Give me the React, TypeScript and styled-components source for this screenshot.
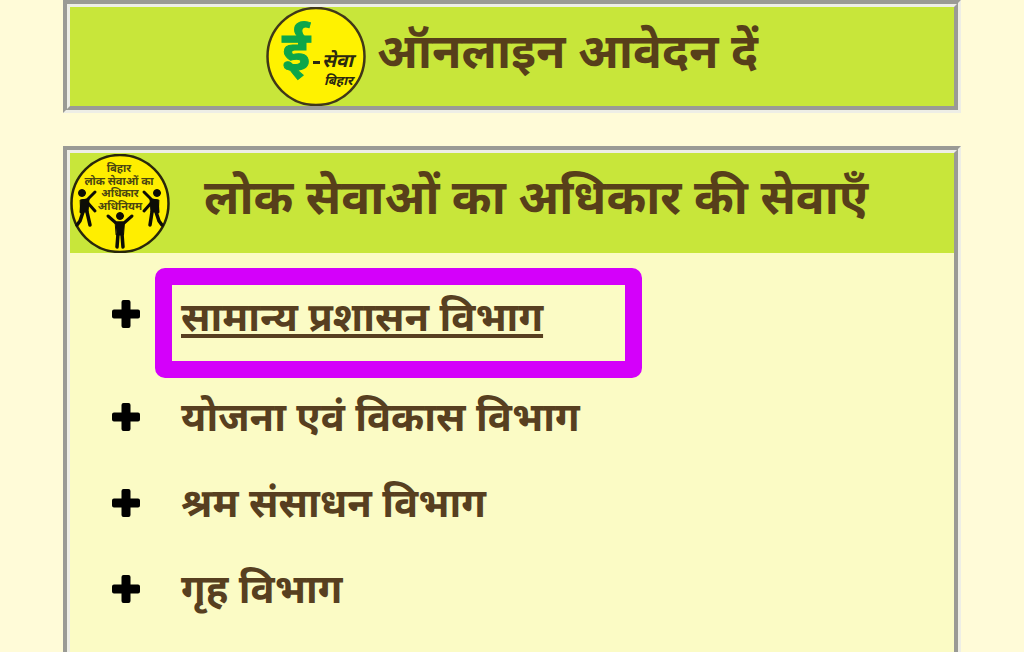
import React from "react";
import styled, { createGlobalStyle } from "styled-components";

const fontStack = `"Noto Sans Devanagari", "Noto Sans", "Open Sans", sans-serif`;

const GlobalStyle = createGlobalStyle`
  *, *::before, *::after { box-sizing: border-box; }
  body {
    margin: 0;
    background: #fffbd8;
    color: #573f20;
    font-family: ${fontStack};
    overflow-x: hidden;
  }
`;

const Page = styled.main`
  display: flex;
  flex-direction: column;
  gap: 33px;
  padding: 0 63px;
`;

const Panel = styled.section`
  border: 7px groove #eeeee6;
  background: #fbfbc5;
`;

const PanelHeader = styled.header<{ $centered?: boolean }>`
  display: flex;
  align-items: center;
  justify-content: ${(p) => (p.$centered ? "center" : "flex-start")};
  gap: ${(p) => (p.$centered ? "11px" : "34px")};
  min-height: ${(p) => (p.$centered ? "99px" : "100px")};
  background: #c8e63a;
`;

const Title = styled.h1`
  margin: 0;
  font-size: 48px;
  line-height: 60px;
  font-weight: 700;
  color: #573f1a;
  white-space: nowrap;
`;

const Logo = styled.svg`
  display: block;
  flex: none;
  width: 100px;
  height: 99px;
`;

const DepartmentList = styled.ul`
  margin: 0;
  padding: 0 0 24px 40px;
  list-style: none;
`;

const Department = styled.li<{ $tall?: boolean }>`
  position: relative;
  display: flex;
  align-items: center;
  gap: 39px;
  height: ${(p) => (p.$tall ? "121px" : "86px")};
`;

const ExpandButton = styled.button`
  display: flex;
  padding: 0;
  border: 0;
  background: none;
  color: #000;
  cursor: pointer;

  svg {
    display: block;
    width: 32px;
    height: 32px;
  }
`;

const DepartmentLink = styled.a<{ $underlined?: boolean }>`
  padding-top: ${(p) => (p.$underlined ? "14px" : "8px")};
  color: inherit;
  font-size: 40px;
  line-height: 52px;
  font-weight: 700;
  white-space: nowrap;
  text-decoration: ${(p) => (p.$underlined ? "underline" : "none")};
  text-decoration-thickness: 4px;
  text-decoration-skip-ink: none;
  text-underline-offset: 3px;
`;

const Highlight = styled.span`
  position: absolute;
  top: 15px;
  left: 45px;
  width: 487px;
  height: 110px;
  border: 17px solid #d400fa;
  border-radius: 10px;
  pointer-events: none;
`;

const PlusIcon = () => (
  <svg viewBox="0 0 32 32" aria-hidden="true">
    <path
      fill="currentColor"
      d="M13.5 2h5a2 2 0 0 1 2 2v7.500h7.500a2 2 0 0 1 2 2v5a2 2 0 0 1-2 2h-7.500v7.500a2 2 0 0 1-2 2h-5a2 2 0 0 1-2-2v-7.500h-7.500a2 2 0 0 1-2-2v-5a2 2 0 0 1 2-2h7.500v-7.500a2 2 0 0 1 2-2z"
    />
  </svg>
);

const EServiceLogo = () => (
  <Logo viewBox="0 0 100 99" role="img" aria-label="ई-सेवा बिहार" fontFamily={fontStack} fontWeight="700">
    <circle cx="50" cy="49.500" r="48.500" fill="#fff200" stroke="#403818" strokeWidth="2.500" />
    <text x="16" y="63" fontSize="54" fill="#0ca64a" stroke="#0ca64a" strokeWidth="1">ई</text>
    <path d="M47 55.500h7" stroke="#2b2910" strokeWidth="3" />
    <text x="56" y="60" fontSize="19" fontStyle="italic" fill="#2b2910">सेवा</text>
    <text x="58" y="78" fontSize="13" fontStyle="italic" fill="#2b2910">बिहार</text>
  </Logo>
);

const RightToServiceLogo = () => (
  <Logo viewBox="0 0 100 99" role="img" aria-label="बिहार लोक सेवाओं का अधिकार अधिनियम" fontFamily={fontStack}>
    <circle cx="50" cy="49.500" r="48.500" fill="#ffee00" stroke="#29270b" strokeWidth="2.500" />
    <g fill="#4b4610" fontSize="11" fontWeight="700" textAnchor="middle">
      <text x="49" y="18">बिहार</text>
      <text x="49" y="31">लोक सेवाओं का</text>
      <text x="50" y="43">अधिकार</text>
      <text x="50" y="56">अधिनियम</text>
    </g>
    <g fill="#0d0d06" stroke="#0d0d06" strokeLinecap="round" strokeLinejoin="round">
      <circle cx="50" cy="62" r="3.500" />
      <path d="M38 62l8 7h8l8-7" fill="none" strokeWidth="3" />
      <path d="M45.500 68h9l-1 13h-7z" />
      <path d="M48 80l-1 13M52 80l1 13" fill="none" strokeWidth="3.500" />
      <circle cx="12" cy="39" r="3.500" />
      <path d="M25 38l-8 8-5 1-1 11M17 48l8 9" fill="none" strokeWidth="3" />
      <path d="M10.500 46l8.500-1-1 13h-7z" />
      <path d="M13 58l-3 9-3 4M17 58l3 13" fill="none" strokeWidth="3.500" />
      <circle cx="87" cy="39" r="3.500" />
      <path d="M74 38l8 8 5 1 1 11M82 48l-8 9" fill="none" strokeWidth="3" />
      <path d="M88.500 46l-8.500-1 1 13h7z" />
      <path d="M86 58l3 9 3 4M82 58l-2 13" fill="none" strokeWidth="3.500" />
    </g>
  </Logo>
);

const departments = [
  { name: "सामान्य प्रशासन विभाग", highlighted: true },
  { name: "योजना एवं विकास विभाग" },
  { name: "श्रम संसाधन विभाग" },
  { name: "गृह विभाग" },
];

export default function App() {
  return (
    <>
      <GlobalStyle />
      <Page lang="hi">
        <Panel>
          <PanelHeader $centered>
            <EServiceLogo />
            <Title>ऑनलाइन आवेदन दें</Title>
          </PanelHeader>
        </Panel>
        <Panel>
          <PanelHeader>
            <RightToServiceLogo />
            <Title as="h2">लोक सेवाओं का अधिकार की सेवाएँ</Title>
          </PanelHeader>
          <DepartmentList>
            {departments.map(({ name, highlighted }) => (
              <Department key={name} $tall={highlighted}>
                <ExpandButton type="button" aria-label={name}>
                  <PlusIcon />
                </ExpandButton>
                <DepartmentLink href="#" $underlined={highlighted}>
                  {name}
                </DepartmentLink>
                {highlighted && <Highlight />}
              </Department>
            ))}
          </DepartmentList>
        </Panel>
      </Page>
    </>
  );
}
